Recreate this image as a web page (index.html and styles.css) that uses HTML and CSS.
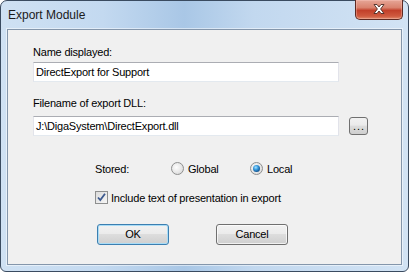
FILE: index.html
```html
<!DOCTYPE html>
<html lang="en">
<head>
  <meta charset="UTF-8" />
  <title>Export Module</title>
  <link rel="stylesheet" href="styles.css">
</head>
<body>
  <div class="window">
    <div class="titlebar">
      <span class="title">Export Module</span>
      <div class="close-btn">
        <svg width="48" height="20" viewBox="0 0 48 20">
          <path d="M19 5.5 L22 5.5 L24 8 L26 5.5 L29 5.5 L25.6 10 L29 14.5 L26 14.5 L24 12 L22 14.5 L19 14.5 L22.4 10 Z" fill="#fff" stroke="#4a2a24" stroke-width="0.9" stroke-linejoin="round"/>
        </svg>
      </div>
    </div>

    <div class="client">
      <div class="field-label">Name displayed:</div>
      <div class="field-row">
        <div class="textbox">DirectExport for Support</div>
      </div>

      <div class="field-label second">Filename of export DLL:</div>
      <div class="field-row">
        <div class="textbox">J:\DigaSystem\DirectExport.dll</div>
        <div class="browse-btn">...</div>
      </div>

      <div class="stored-row">
        <span class="stored-label">Stored:</span>
        <span class="radio-item global">
          <span class="radio"></span>
          <span>Global</span>
        </span>
        <span class="radio-item">
          <span class="radio checked"></span>
          <span>Local</span>
        </span>
      </div>

      <div class="check-row">
        <span class="checkbox">
          <svg width="11" height="11" viewBox="0 0 11 11">
            <path d="M2 5.5 L4.3 8 L9 1.8" fill="none" stroke="#3d5a8f" stroke-width="1.8"/>
          </svg>
        </span>
        <span>Include text of presentation in export</span>
      </div>

      <div class="button-row">
        <div class="btn default">OK</div>
        <div class="btn">Cancel</div>
      </div>
    </div>
  </div>
</body>
</html>
```

FILE: styles.css
```css
body {
  margin: 0;
  font-family: "Liberation Sans", Arial, sans-serif;
  font-size: 11px;
  letter-spacing: -0.2px;
  color: #000;
}
.window {
  width: 409px;
  height: 272px;
  box-sizing: border-box;
  border: 1px solid #3a4b60;
  border-radius: 7px 7px 6px 6px;
  background: linear-gradient(to right, #cfe1f3, #c3d9f0 25%, #a9c7e6 45%, #c2d8ef 62%, #d2e3f4);
  padding: 0 6px 6px;
  display: flex;
  flex-direction: column;
}
.titlebar {
  height: 28px;
  margin: 0 -6px;
  padding-left: 7px;
  display: flex;
  align-items: flex-start;
}
.title {
  font-size: 12px;
  letter-spacing: 0;
  line-height: 14px;
  padding-top: 7px;
  color: #1a1a1a;
}
.close-btn {
  margin-left: auto;
  margin-right: 5px;
  margin-top: -1px;
  width: 48px;
  height: 20px;
  box-sizing: border-box;
  border: 1px solid #5e2a22;
  border-top: none;
  border-radius: 0 0 5px 5px;
  background: linear-gradient(to bottom, #e6a697, #d9826e 40%, #c2402a 55%, #cf5a3f 85%, #e08b6c);
  box-shadow: inset 0 0 0 1px rgba(255, 210, 200, 0.35);
}
.close-btn svg {
  display: block;
  margin: -1px 0 0 -1px;
}
.client {
  flex: 1;
  border: 1px solid #8496ab;
  background: #f0f0f0;
  padding: 16px 0 0 25px;
  box-shadow: 0 0 0 1px rgba(255, 255, 255, 0.5);
}
.field-label {
  line-height: 13px;
}
.field-label.second {
  margin-top: 15px;
}
.field-row {
  display: flex;
  align-items: center;
  gap: 10px;
  margin-top: 3px;
}
.field-label.second + .field-row {
  margin-top: 6px;
}
.textbox {
  width: 306px;
  height: 20px;
  box-sizing: border-box;
  background: #fff;
  border: 1px solid #e2e3ea;
  border-top-color: #abadb3;
  border-bottom-color: #e3e9ef;
  padding: 0 2px;
  line-height: 18px;
}
.browse-btn {
  width: 19px;
  height: 18px;
  box-sizing: border-box;
  border: 1px solid #707070;
  border-radius: 3px;
  background: linear-gradient(to bottom, #f2f2f2, #ebebeb 45%, #dddddd 50%, #cfcfcf);
  text-align: center;
  line-height: 17px;
  letter-spacing: 1px;
  padding-left: 1px;
}
.stored-row {
  display: flex;
  align-items: center;
  height: 13px;
  margin: 26px 0 0 62px;
}
.stored-label {
  width: 76px;
}
.radio-item {
  display: flex;
  align-items: center;
  gap: 4px;
}
.radio-item.global {
  width: 79px;
}
.radio {
  width: 13px;
  height: 13px;
  box-sizing: border-box;
  border-radius: 50%;
  border: 1px solid #8e8f8f;
  background: radial-gradient(circle at 40% 40%, #fdfdfd, #e4e4e4 60%, #cfcfcf);
  display: flex;
  align-items: center;
  justify-content: center;
}
.radio.checked::after {
  content: "";
  width: 7px;
  height: 7px;
  border-radius: 50%;
  background: radial-gradient(circle at 40% 35%, #a8e2ff, #3b9ee0 35%, #0f4f8c 75%, #0b3a68);
}
.check-row {
  display: flex;
  align-items: center;
  gap: 3px;
  height: 13px;
  margin: 16px 0 0 62px;
}
.checkbox {
  width: 13px;
  height: 13px;
  box-sizing: border-box;
  border: 1px solid #8e8f8f;
  background: linear-gradient(135deg, #dcdcdc, #f6f6f6);
  display: flex;
}
.checkbox svg {
  display: block;
}
.button-row {
  display: flex;
  gap: 47px;
  margin: 20px 0 0 64px;
}
.btn {
  width: 72px;
  height: 21px;
  box-sizing: border-box;
  border: 1px solid #707070;
  border-radius: 3px;
  background: linear-gradient(to bottom, #f2f2f2, #ebebeb 45%, #dddddd 50%, #cfcfcf);
  text-align: center;
  line-height: 19px;
  box-shadow: inset 0 0 0 1px rgba(255, 255, 255, 0.7);
}
.btn.default {
  border-color: #3c7fb1;
  box-shadow: inset 0 0 0 1px #a9dcf6;
}
```
